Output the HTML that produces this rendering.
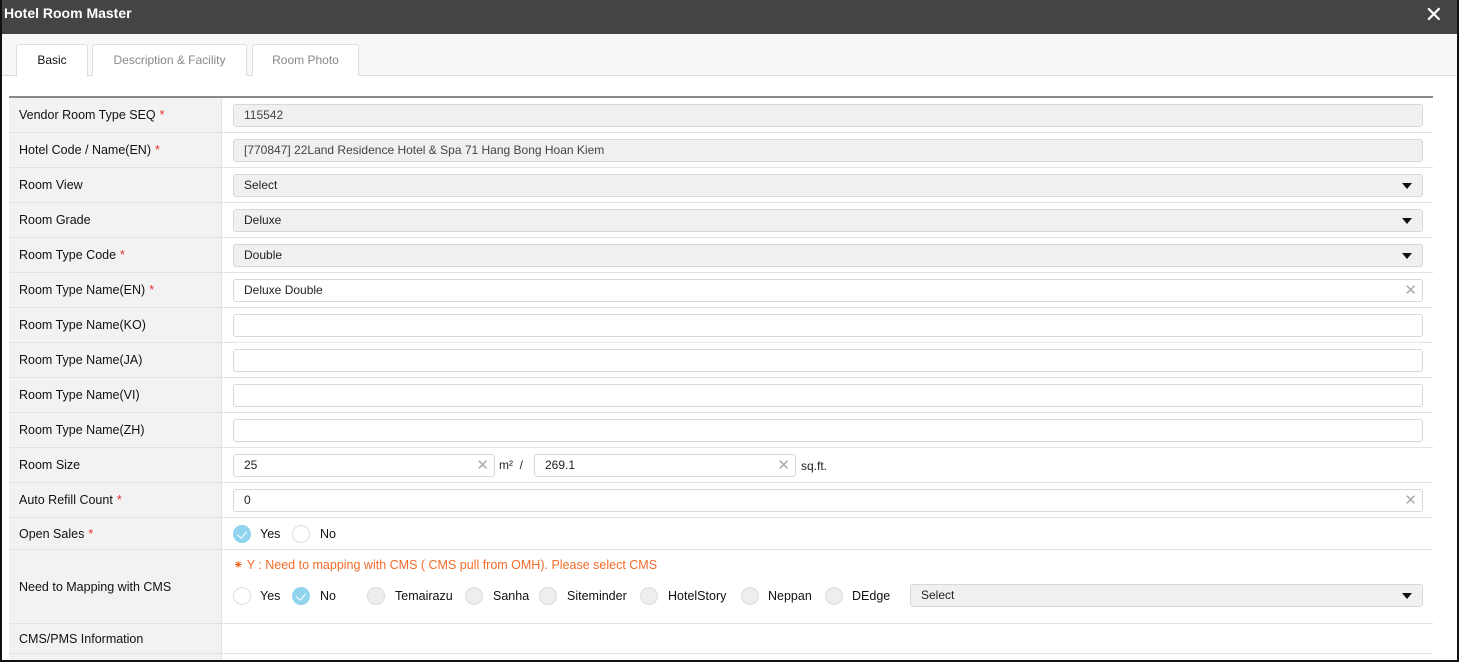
<!DOCTYPE html>
<html><head><style>
*{box-sizing:border-box;margin:0;padding:0}
html,body{width:1459px;height:662px;overflow:hidden}
body{background:#fff;font-family:"Liberation Sans",sans-serif;font-size:12.5px;color:#222;position:relative}
.frame{position:absolute;left:0;top:0;width:1459px;height:662px;border:2px solid #111;border-top:none;z-index:5}
.hdr{position:absolute;left:0;top:0;width:1459px;height:34px;background:#444;color:#fff;font-weight:bold;font-size:14px;padding:5px 4px}
.close{position:absolute;right:16px;top:2px;font-size:22px;font-weight:normal;color:#fff}
.tabbar{position:absolute;left:2px;top:34px;width:1455px;height:42px;background:#f8f8fa;border-bottom:1px solid #ddd}
.tab{position:absolute;top:10px;height:32px;border:1px solid #ddd;border-bottom:none;background:#fff;color:#888;font-size:12px;text-align:center;line-height:30px;border-radius:3px 3px 0 0}
.tab.on{color:#111;height:33px}
.tbl{position:absolute;left:9px;top:96px;width:1424px;border-top:2px solid #888}
.row{position:relative;border-bottom:1px solid #e2e2e2;height:35px}
.lab{position:absolute;left:0;top:0;bottom:0;width:213px;background:#f2f2f2;border-right:1px solid #e2e2e2;padding-left:10px;display:flex;align-items:center;font-size:12.5px;color:#111}
.req{color:#e53030;margin-left:4px}
.inp{position:absolute;left:224px;right:10px;top:6px;height:23px;border:1px solid #d8d8d8;border-radius:3px;padding-left:10px;line-height:21px;font-size:12px;background:#fff}
.dis{background:#f0f0f0;color:#444}
.sel{background:#f0f0f0}
.arr{position:absolute;right:10px;top:8px;width:0;height:0;border-left:5px solid transparent;border-right:5px solid transparent;border-top:6px solid #111}
.x{position:absolute;right:5px;top:0;color:#aaa;font-size:15px}
.rad{position:absolute;width:18px;height:18px;border-radius:50%;border:1px solid #ddd;background:#fff}
.rad.g{background:#eee}
.rad.c{background:#8fd3ef;border-color:#8fd3ef}
.rad.c:after{content:"";position:absolute;left:5px;top:3px;width:5px;height:8px;border:solid #fff;border-width:0 1.5px 1.5px 0;transform:rotate(40deg)}
.rl{position:absolute;font-size:12.5px;color:#111}
</style></head><body>
<div class="hdr">Hotel Room Master<span class="close">✕</span></div>
<div class="tabbar">
<div class="tab on" style="left:14px;width:72px">Basic</div>
<div class="tab" style="left:90px;width:155px">Description &amp; Facility</div>
<div class="tab" style="left:250px;width:107px">Room Photo</div>
</div>
<div class="tbl">
<div class="row"><div class="lab">Vendor Room Type SEQ<span class="req">*</span></div><div class="inp dis">115542</div></div>
<div class="row"><div class="lab">Hotel Code / Name(EN)<span class="req">*</span></div><div class="inp dis">[770847] 22Land Residence Hotel &amp; Spa 71 Hang Bong Hoan Kiem</div></div>
<div class="row"><div class="lab">Room View</div><div class="inp sel">Select<span class="arr"></span></div></div>
<div class="row"><div class="lab">Room Grade</div><div class="inp sel">Deluxe<span class="arr"></span></div></div>
<div class="row"><div class="lab">Room Type Code<span class="req">*</span></div><div class="inp sel">Double<span class="arr"></span></div></div>
<div class="row"><div class="lab">Room Type Name(EN)<span class="req">*</span></div><div class="inp">Deluxe Double<span class="x">✕</span></div></div>
<div class="row"><div class="lab">Room Type Name(KO)</div><div class="inp"></div></div>
<div class="row"><div class="lab">Room Type Name(JA)</div><div class="inp"></div></div>
<div class="row"><div class="lab">Room Type Name(VI)</div><div class="inp"></div></div>
<div class="row"><div class="lab">Room Type Name(ZH)</div><div class="inp"></div></div>
<div class="row"><div class="lab">Room Size</div>
<div class="inp" style="right:auto;width:262px">25<span class="x">✕</span></div>
<span style="position:absolute;left:490px;top:10px;font-size:12px">m² &nbsp;/</span>
<div class="inp" style="left:525px;right:auto;width:262px">269.1<span class="x">✕</span></div>
<span style="position:absolute;left:792px;top:11px;font-size:12px">sq.ft.</span></div>
<div class="row"><div class="lab">Auto Refill Count<span class="req">*</span></div><div class="inp">0<span class="x">✕</span></div></div>
<div class="row" style="height:32px"><div class="lab">Open Sales<span class="req">*</span></div>
<span class="rad c" style="left:224px;top:7px"></span><span class="rl" style="left:251px;top:9px">Yes</span>
<span class="rad" style="left:283px;top:7px"></span><span class="rl" style="left:311px;top:9px">No</span></div>
<div class="row" style="height:74px"><div class="lab">Need to Mapping with CMS</div>
<div style="position:absolute;left:224px;top:7px;color:#f26b2a;font-size:12.5px">⁕ Y : Need to mapping with CMS ( CMS pull from OMH). Please select CMS</div>
<span class="rad" style="left:224px;top:37px"></span><span class="rl" style="left:251px;top:39px">Yes</span>
<span class="rad c" style="left:283px;top:37px"></span><span class="rl" style="left:311px;top:39px">No</span>
<span class="rad g" style="left:358px;top:37px"></span><span class="rl" style="left:386px;top:39px">Temairazu</span>
<span class="rad g" style="left:456px;top:37px"></span><span class="rl" style="left:484px;top:39px">Sanha</span>
<span class="rad g" style="left:530px;top:37px"></span><span class="rl" style="left:558px;top:39px">Siteminder</span>
<span class="rad g" style="left:631px;top:37px"></span><span class="rl" style="left:659px;top:39px">HotelStory</span>
<span class="rad g" style="left:732px;top:37px"></span><span class="rl" style="left:759px;top:39px">Neppan</span>
<span class="rad g" style="left:816px;top:37px"></span><span class="rl" style="left:843px;top:39px">DEdge</span>
<div class="inp sel" style="left:901px;top:34px;font-size:12px">Select<span class="arr"></span></div></div>
<div class="row" style="height:30px"><div class="lab">CMS/PMS Information</div></div>
<div class="row" style="height:30px"><div class="lab"></div></div>
</div>
<div class="frame"></div>
</body></html>
